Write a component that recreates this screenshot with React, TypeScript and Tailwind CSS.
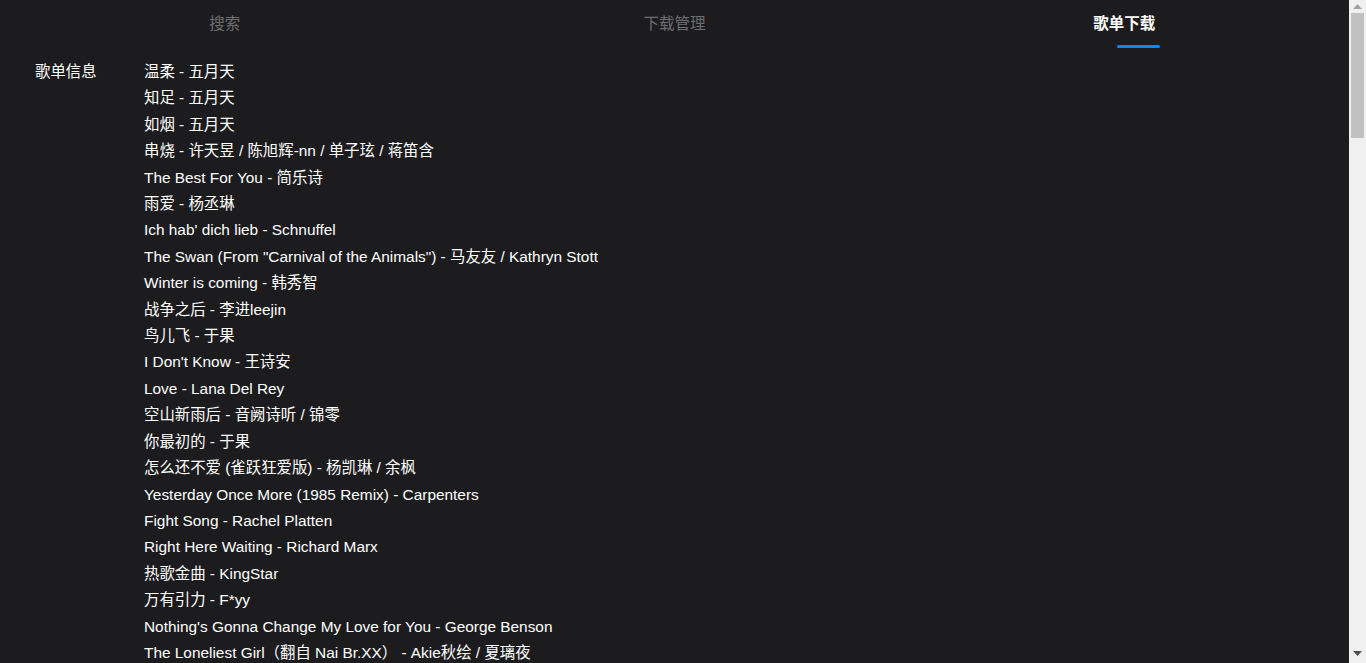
import React from "react";

const songs: string[] = [
  "温柔 - 五月天",
  "知足 - 五月天",
  "如烟 - 五月天",
  "串烧 - 许天昱 / 陈旭辉-nn / 单子玹 / 蒋笛含",
  "The Best For You - 简乐诗",
  "雨爱 - 杨丞琳",
  "Ich hab' dich lieb - Schnuffel",
  "The Swan (From \"Carnival of the Animals\") - 马友友 / Kathryn Stott",
  "Winter is coming - 韩秀智",
  "战争之后 - 李进leejin",
  "鸟儿飞 - 于果",
  "I Don't Know - 王诗安",
  "Love - Lana Del Rey",
  "空山新雨后 - 音阙诗听 / 锦零",
  "你最初的 - 于果",
  "怎么还不爱 (雀跃狂爱版) - 杨凯琳 / 余枫",
  "Yesterday Once More (1985 Remix) - Carpenters",
  "Fight Song - Rachel Platten",
  "Right Here Waiting - Richard Marx",
  "热歌金曲 - KingStar",
  "万有引力 - F*yy",
  "Nothing's Gonna Change My Love for You - George Benson",
  "The Loneliest Girl（翻自 Nai Br.XX） - Akie秋绘 / 夏璃夜",
  "晴天 - 周杰伦",
  "七里香 - 周杰伦",
  "稻香 - 周杰伦",
  "告白气球 - 周杰伦",
  "后来 - 刘若英",
  "十年 - 陈奕迅",
  "富士山下 - 陈奕迅",
];

const tabs = ["搜索", "下载管理", "歌单下载"];

function Scrollbar() {
  return (
    <div className="flex h-screen w-[17px] shrink-0 flex-col bg-[#f0f0f0]">
      <div className="flex h-[13px] items-center justify-center">
        <svg width="9" height="5" viewBox="0 0 9 5">
          <path d="M4.5 0 L9 5 L0 5 Z" fill="#a3a3a3" />
        </svg>
      </div>
      <div className="mx-[2px] h-[125px] bg-[#c1c1c1]" />
      <div className="flex-1" />
      <div className="flex h-[17px] items-center justify-center pb-[2px]">
        <svg width="9" height="5" viewBox="0 0 9 5">
          <path d="M0 0 L9 0 L4.5 5 Z" fill="#505050" />
        </svg>
      </div>
    </div>
  );
}

export default function App() {
  return (
    <div
      className="flex h-screen overflow-hidden bg-[#1c1c1e] text-white"
      style={{ fontFamily: '"Liberation Sans", Arial, "Noto Sans CJK SC", sans-serif' }}
    >
      <div className="min-w-0 flex-1 overflow-hidden">
        <div className="flex h-[48px]">
          {tabs.map((t, i) => {
            const active = i === 2;
            return (
              <div key={t} className="relative flex flex-1 items-center justify-center">
                <span
                  className={
                    active
                      ? "text-[15.5px] font-bold text-white"
                      : "text-[15.5px] text-[#6e6e72]"
                  }
                >
                  {t}
                </span>
                {active && (
                  <div className="absolute bottom-[0px] left-[calc(50%-7px)] h-[3px] w-[43px] rounded-sm bg-[#0a84ff]" />
                )}
              </div>
            );
          })}
        </div>
        <div className="flex pt-[11px]">
          <div className="w-[144px] shrink-0 pl-[35px] text-[15.4px] leading-[26.4px]">歌单信息</div>
          <div className="flex flex-col">
            {songs.map((s, i) => (
              <div key={i} className="text-[15.4px] leading-[26.4px] whitespace-pre">
                {s}
              </div>
            ))}
          </div>
        </div>
      </div>
      <Scrollbar />
    </div>
  );
}
